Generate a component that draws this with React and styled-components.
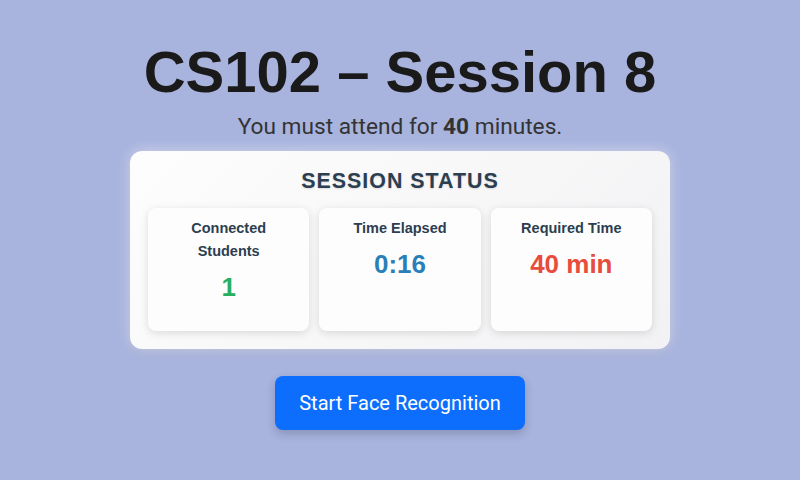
import React from "react";
import styled, { createGlobalStyle } from "styled-components";

const GlobalStyle = createGlobalStyle`
  html, body {
    margin: 0;
    padding: 0;
    background: #a8b3de;
  }
  body {
    font-family: Roboto, "Liberation Sans", Arial, sans-serif;
  }
`;

const Page = styled.div`
  min-height: 480px;
  display: flex;
  flex-direction: column;
  align-items: center;
  padding-top: 37px;
  box-sizing: border-box;
`;

const Title = styled.h1`
  margin: 0;
  font-family: "Liberation Sans", Arial, sans-serif;
  font-size: 58px;
  font-weight: 700;
  line-height: 69px;
  color: #1a1a1a;
`;

const Subtitle = styled.p`
  margin: 7px 0 10px;
  font-size: 22.7px;
  line-height: 28px;
  color: #333;

  strong {
    font-weight: 700;
  }
`;

const StatusCard = styled.section`
  width: 540px;
  box-sizing: border-box;
  padding: 18px;
  border-radius: 12px;
  background: linear-gradient(135deg, #fdfdfd 0%, #f2f2f4 100%);
  box-shadow: 0 0 14px rgba(255, 255, 255, 0.55), 0 4px 12px rgba(0, 0, 0, 0.08);
`;

const StatusHeading = styled.h2`
  margin: 0 0 14px;
  text-align: center;
  font-family: "Liberation Sans", Arial, sans-serif;
  font-size: 21.4px;
  line-height: 25px;
  font-weight: 700;
  letter-spacing: 1px;
  color: #2c3e50;
  text-shadow: 0 1px 2px rgba(0, 0, 0, 0.12);
`;

const StatGrid = styled.div`
  display: grid;
  grid-template-columns: repeat(3, 1fr);
  gap: 10px;
`;

const StatBox = styled.div`
  min-height: 123px;
  box-sizing: border-box;
  padding: 9px 12px;
  border-radius: 8px;
  background: #fdfdfd;
  box-shadow: 0 2px 8px rgba(0, 0, 0, 0.13);
  text-align: center;
  font-family: "Liberation Sans", Arial, sans-serif;
`;

const StatLabel = styled.div`
  font-size: 14.5px;
  line-height: 23px;
  font-weight: 700;
  color: #2c3e50;
`;

const StatValue = styled.div`
  margin-top: 9px;
  font-size: 26px;
  line-height: 30px;
  font-weight: 700;
  color: ${({ $color }) => $color};
`;

const StartButton = styled.button`
  margin-top: 27px;
  padding: 12px 24px;
  border: none;
  border-radius: 8px;
  background: #0d6efd;
  color: #fff;
  font-family: Roboto, "Liberation Sans", Arial, sans-serif;
  font-size: 20px;
  line-height: 30px;
  cursor: pointer;
  box-shadow: 0 4px 10px rgba(0, 0, 0, 0.18);
`;

const stats = [
  { label: "Connected Students", value: "1", color: "#27ae60", wrap: true },
  { label: "Time Elapsed", value: "0:16", color: "#2980b9" },
  { label: "Required Time", value: "40 min", color: "#e74c3c" },
];

const App = () => {
  return (
    <Page>
      <GlobalStyle />
      <Title>CS102 – Session 8</Title>
      <Subtitle>
        You must attend for <strong>40</strong> minutes.
      </Subtitle>
      <StatusCard>
        <StatusHeading>SESSION STATUS</StatusHeading>
        <StatGrid>
          {stats.map((s) => (
            <StatBox key={s.label}>
              <StatLabel>
                {s.wrap ? (
                  <>
                    Connected
                    <br />
                    Students
                  </>
                ) : (
                  s.label
                )}
              </StatLabel>
              <StatValue $color={s.color}>{s.value}</StatValue>
            </StatBox>
          ))}
        </StatGrid>
      </StatusCard>
      <StartButton>Start Face Recognition</StartButton>
    </Page>
  );
};

export default App;
